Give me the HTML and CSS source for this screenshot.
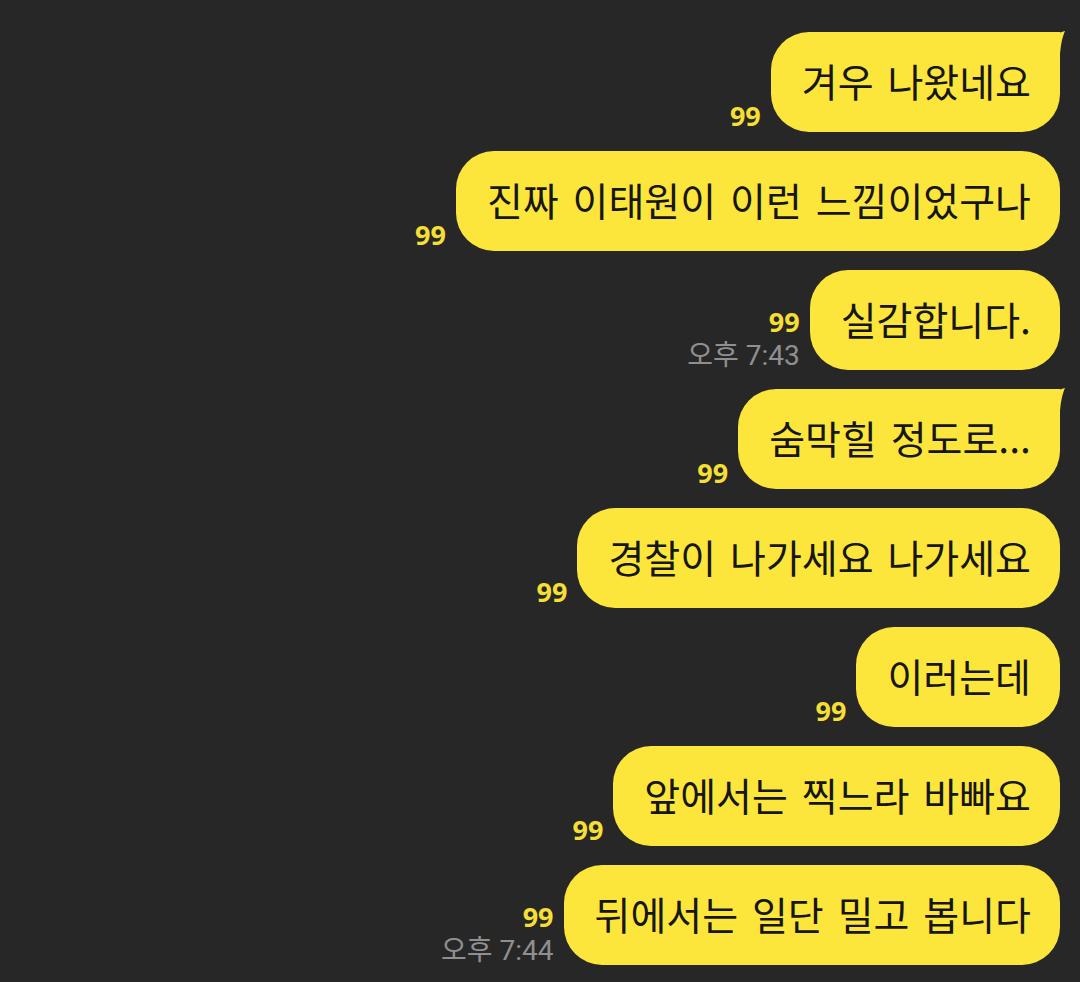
FILE: index.html
```html
<!DOCTYPE html>
<html lang="ko">
<head>
<meta charset="utf-8">
<link rel="stylesheet" href="styles.css">
</head>
<body>
<div class="chat">
  <div class="row">
    <div class="meta"><span class="unread">99</span></div>
    <div class="bubble tail">
      <svg class="tail-svg" viewBox="0 0 48 60" width="48" height="60"><path d="M0,2 L16,2 C22,2 25,5 28,10 C33,5 38,3 45,1 C42,8 41,14 40,24 L40,60 L0,60 Z"/></svg>
      <span class="text">겨우 나왔네요</span>
    </div>
  </div>
  <div class="row">
    <div class="meta"><span class="unread">99</span></div>
    <div class="bubble"><span class="text">진짜 이태원이 이런 느낌이었구나</span></div>
  </div>
  <div class="row">
    <div class="meta"><span class="unread">99</span><span class="time">오후 7:43</span></div>
    <div class="bubble"><span class="text">실감합니다.</span></div>
  </div>
  <div class="row">
    <div class="meta"><span class="unread">99</span></div>
    <div class="bubble tail">
      <svg class="tail-svg" viewBox="0 0 48 60" width="48" height="60"><path d="M0,2 L16,2 C22,2 25,5 28,10 C33,5 38,3 45,1 C42,8 41,14 40,24 L40,60 L0,60 Z"/></svg>
      <span class="text">숨막힐 정도로...</span>
    </div>
  </div>
  <div class="row">
    <div class="meta"><span class="unread">99</span></div>
    <div class="bubble"><span class="text">경찰이 나가세요 나가세요</span></div>
  </div>
  <div class="row">
    <div class="meta"><span class="unread">99</span></div>
    <div class="bubble"><span class="text">이러는데</span></div>
  </div>
  <div class="row">
    <div class="meta"><span class="unread">99</span></div>
    <div class="bubble"><span class="text">앞에서는 찍느라 바빠요</span></div>
  </div>
  <div class="row">
    <div class="meta"><span class="unread">99</span><span class="time">오후 7:44</span></div>
    <div class="bubble"><span class="text">뒤에서는 일단 밀고 봅니다</span></div>
  </div>
</div>
</body>
</html>
```

FILE: styles.css
```css
html, body {
  margin: 0;
  padding: 0;
  background: #272727;
}
body {
  width: 1080px;
  height: 982px;
  overflow: hidden;
}
.chat {
  display: flex;
  flex-direction: column;
  gap: 19px;
  padding: 32px 20px 0 0;
}
.row {
  display: flex;
  justify-content: flex-end;
  align-items: flex-end;
  gap: 10px;
}
.meta {
  display: flex;
  flex-direction: column;
  align-items: flex-end;
  padding-bottom: 1px;
}
.unread {
  font-family: "Noto Sans", "Open Sans", sans-serif;
  font-weight: 700;
  font-size: 27px;
  line-height: 30px;
  color: #f6df35;
}
.time {
  font-family: Roboto, "Noto Sans CJK KR", sans-serif;
  font-size: 28px;
  line-height: 28px;
  margin-top: 5px;
  margin-bottom: -1px;
  color: #8f8f8f;
}
.bubble {
  position: relative;
  height: 100px;
  box-sizing: border-box;
  display: flex;
  align-items: center;
  padding: 0 29px 4px 31px;
  background: #fde63b;
  border-radius: 38px;
}
.bubble.tail {
  border-top-right-radius: 0;
}
.tail-svg {
  position: absolute;
  right: -8px;
  top: -2px;
  fill: #fde63b;
}
.text {
  position: relative;
  font-family: "Noto Sans CJK KR", "Noto Sans", sans-serif;
  font-size: 39px;
  line-height: 48px;
  color: #161616;
  white-space: nowrap;
  word-spacing: 3px;
}
```
